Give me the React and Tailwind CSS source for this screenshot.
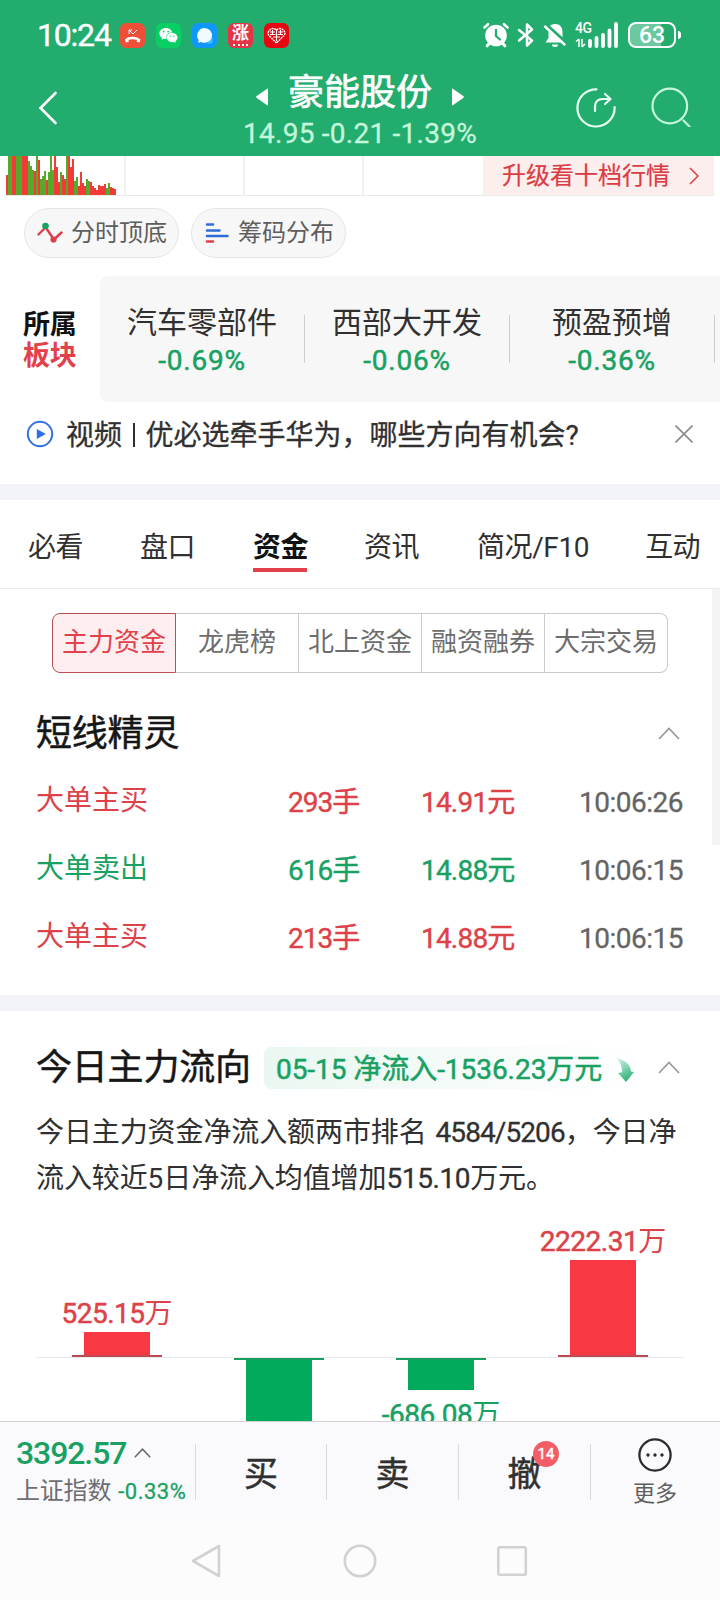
import { FaWeixin } from "react-icons/fa";

const volume = [
  ["r", 20], ["g", 39], ["g", 39], ["r", 39], ["r", 39], ["g", 39], ["g", 39], ["g", 39],
  ["r", 39], ["r", 39], ["r", 39], ["g", 34], ["g", 29], ["g", 25], ["r", 24], ["g", 39],
  ["r", 35], ["g", 16], ["g", 19], ["g", 24], ["r", 15], ["g", 23], ["g", 39], ["g", 25],
  ["r", 39], ["r", 28], ["r", 13], ["g", 23], ["r", 20], ["r", 16], ["g", 39], ["r", 39],
  ["r", 28], ["r", 36], ["g", 14], ["g", 18], ["r", 9], ["r", 23], ["r", 12], ["r", 9],
  ["g", 16], ["g", 14], ["r", 13], ["r", 9], ["r", 7], ["r", 5], ["r", 10], ["r", 9],
  ["r", 9], ["r", 11], ["g", 7], ["g", 12], ["r", 8], ["r", 7], ["r", 6],
];

const sectors = [
  { name: "汽车零部件", change: "-0.69%" },
  { name: "西部大开发", change: "-0.06%" },
  { name: "预盈预增", change: "-0.36%" },
];

const segments = ["龙虎榜", "北上资金", "融资融券", "大宗交易"];

const orders = [
  { type: "大单主买", count: "293", price: "14.91", time: "10:06:26", up: true },
  { type: "大单卖出", count: "616", price: "14.88", time: "10:06:15", up: false },
  { type: "大单主买", count: "213", price: "14.88", time: "10:06:15", up: true },
];

const flows = [
  { label: "525.15", up: true, height: 23 },
  { label: "", up: false, height: 110 },
  { label: "-686.08", up: false, height: 30 },
  { label: "2222.31", up: true, height: 95 },
];

function StatusBar() {
  return (
    <div className="flex h-[70px] items-center pl-[37px] pr-[39px]">
      <span className="w-[83px] text-[32px] leading-none tracking-[-1.2px] [-webkit-text-stroke:0.4px]">10:24</span>
      <div className="flex flex-1 gap-[11px]">
        <span className="flex size-[25px] items-center justify-center rounded-md bg-[#ee4f38]">
          <svg viewBox="0 0 25 25" className="size-[25px]" fill="none" stroke="white">
            <path d="M9 7v4M9 7h3M9 7l4 4 4-4" strokeWidth="1" />
            <path d="M6 17.5c2-3.4 11-3.4 13.500 0" strokeWidth="2.400" />
            <path d="M5.500 18l3-.8M20 18l-3-.8" strokeWidth="3" />
          </svg>
        </span>
        <span className="flex size-[25px] items-center justify-center rounded-md bg-[#07cf63]">
          <FaWeixin className="size-[19px]" />
        </span>
        <span className="flex size-[25px] items-center justify-center rounded-md bg-[#0f97fb]">
          <svg viewBox="0 0 25 25" className="size-[25px]">
            <path d="M14 17.500c3 0 5-2 6-4 1 3 .5 5-.2 7h-4z" fill="#35c8ff" />
            <path d="M12.500 5a7.600 7.400 0 1 1-3.500 14l-3 .7.7-2.700A7.500 7.500 0 0 1 12.500 5z" fill="#f0faff" />
          </svg>
        </span>
        <span className="flex size-[25px] flex-col items-center rounded-md bg-[#e33546]">
          <span className="text-[17px] font-bold leading-[20px]">涨</span>
          <span className="mt-px h-[2px] w-[15px] border-t-2 border-dotted border-white" />
        </span>
        <span className="flex size-[25px] items-center justify-center rounded-md bg-[#e60510]">
          <svg viewBox="0 0 25 25" className="size-[25px]" fill="none" stroke="white">
            <path d="M12.500 20l-8-8c-2-4 4-9 8-5 4-4 10 1 8 5z" strokeWidth="1.500" strokeDasharray="2 .7" />
            <path d="M6 9h5M14 9h5M6 11.500h5.500M13.500 11.500H19M9 14h7M12.500 7v11M8.500 7v5M16.500 7v5" strokeWidth="1.100" />
          </svg>
        </span>
      </div>
      <div className="flex items-center">
        <svg viewBox="0 0 26 26" className="h-[26px] w-[26px]" fill="none" stroke="white" strokeLinecap="round">
          <circle cx="13" cy="13.500" r="10.800" fill="white" stroke="none" />
          <path d="M1.500 5.500L5 2.200M24.500 5.500L21 2.200" strokeWidth="2.600" />
          <path d="M4 24l3-3.500M22 24l-3-3.500" strokeWidth="2.800" />
          <path d="M13 8v6l4 3.500" stroke="#22ac6e" strokeWidth="2.300" />
        </svg>
        <svg viewBox="0 0 18 26" className="ml-2 h-[26px] w-[18px]" fill="none" stroke="white" strokeWidth="2.500" strokeLinecap="round" strokeLinejoin="round">
          <path d="M2 8l13 10.500L10 23.500v-21l5 5L2 18.500" />
        </svg>
        <svg viewBox="0 0 24 26" className="ml-2 h-[26px] w-[24px]">
          <path d="M12 2c5 0 7.500 3.500 7.500 8v6l3 4.500h-20l3-4.500v-6C5.500 5.500 7 2 12 2z" fill="white" />
          <path d="M9 22.500h6a3 2.500 0 0 1-6 0z" fill="white" />
          <path d="M3 2.500l21 19" stroke="#22ac6e" strokeWidth="3.500" />
          <path d="M2 4.500l19.500 18" stroke="white" strokeWidth="2.400" strokeLinecap="round" />
        </svg>
        <div className="relative ml-2 h-[26px] w-11">
          <span className="absolute left-0 top-0 text-[14px] font-medium leading-[13px] tracking-[-0.5px]">4G</span>
          <svg viewBox="0 0 44 26" className="h-[26px] w-11" stroke="white">
            <path d="M4 17v8M1 19.500L4 17M7 17v8M7 25l3-3" strokeWidth="1.500" fill="none" />
            <path d="M15 19v5M21.500 16v8M28 13v11M34.500 8.500V24M41 2v22" strokeWidth="3.800" strokeLinecap="round" />
          </svg>
        </div>
        <div className="ml-[9px] flex h-[26px] w-[48px] items-center justify-center rounded-lg border-2 border-white bg-linear-to-r from-[#6bc89f] from-70% to-transparent to-70% text-[23px] font-medium leading-none">
          63
        </div>
        <span className="ml-[2px] h-2 w-[3px] rounded-r bg-white" />
      </div>
    </div>
  );
}

function Header() {
  return (
    <header className="h-[156px] shrink-0 bg-[#22ac6e] text-white">
      <StatusBar />
      <div className="flex h-[86px] items-start px-[38px]">
        <svg viewBox="0 0 20 34" className="mt-[21px] h-[34px] w-5 shrink-0" fill="none" stroke="white" strokeWidth="2.600" strokeLinecap="round">
          <path d="M17.500 2L2.500 17l15 15" />
        </svg>
        <div className="ml-[128px] flex w-[344px] shrink-0 flex-col items-center">
          <div className="mt-px flex items-center pl-1 text-[36px] leading-[44px] [-webkit-text-stroke:0.7px]">
            <svg viewBox="0 0 12 18" className="mt-2 h-[18px] w-3" fill="white">
              <path d="M12 1.500v15Q12 18 10.800 17L.7 10Q-.3 9 .7 8L10.800 1Q12 0 12 1.500z" />
            </svg>
            <span className="mx-[20px]">豪能股份</span>
            <svg viewBox="0 0 12 18" className="mt-2 h-[18px] w-3" fill="white">
              <path d="M0 1.500v15Q0 18 1.200 17l10.100-7q1-1 0-2L1.200 1Q0 0 0 1.500z" />
            </svg>
          </div>
          <p className="mt-[3px] pl-1 text-[28px] leading-[32px] tracking-[0.25px] text-[#c5f7dd] [-webkit-text-stroke:0.3px]">
            14.95 -0.21 -1.39%
          </p>
        </div>
        <svg viewBox="0 0 40 40" className="ml-[46px] mt-[18px] size-10 shrink-0" fill="none" stroke="#e9fff4" strokeWidth="2.200" strokeLinecap="round">
          <path d="M20.500 1.300A18.600 18.600 0 1 0 38.600 19" />
          <path d="M19 23v-4c0-5 3-8 8-8h7M29 6l5.500 5-5.500 5" strokeLinejoin="round" />
        </svg>
        <svg viewBox="0 0 40 40" className="ml-[35px] mt-[17px] size-10 shrink-0" fill="none" stroke="#c5f7dd" strokeWidth="2.200" strokeLinecap="round">
          <circle cx="18.800" cy="19" r="17.300" />
          <path d="M32.500 33.500l6 6" />
        </svg>
      </div>
    </header>
  );
}

function VolumeStrip() {
  return (
    <div className="mx-1.5 flex h-10 shrink-0 border-b border-[#ebebeb]">
      <svg viewBox="0 0 110 39" className="h-[39px] w-[110px]" shapeRendering="crispEdges">
        {volume.map(([side, h], i) => (
          <rect key={i} x={i * 2} y={39 - h} width="2" height={h} fill={side === "r" ? "#f23b36" : "#55aa2c"} />
        ))}
      </svg>
      <div className="ml-2 w-[119px] border-l-2 border-[#f0f0f0]" />
      <div className="w-[119px] border-l-2 border-[#f0f0f0]" />
      <div className="w-[121px] border-l-2 border-[#f0f0f0]" />
      <div className="flex flex-1 items-center bg-[#fdeeee] pl-[19px] text-[24px] leading-[38px] text-[#dc3c43] [-webkit-text-stroke:0.2px]">
        升级看十档行情
        <svg viewBox="0 0 10 18" className="ml-[19px] h-[18px] w-2.5" fill="none" stroke="#dc3c43" strokeWidth="1.500">
          <path d="M1 1l8 8-8 8" />
        </svg>
      </div>
    </div>
  );
}

function Tools() {
  return (
    <div className="mt-3 flex h-[50px] shrink-0 gap-3 pl-6 text-[24px] text-[#5e5e5e]">
      <div className="flex w-[155px] items-center rounded-full border border-[#e4e4e4] bg-[#f7f7f7] pl-3">
        <svg viewBox="0 0 26 22" className="mr-2 h-[22px] w-[26px]" fill="none">
          <path d="M1.500 12.500L7 7M9.500 6.500L16.500 17M17 17.500L24.500 10.500" stroke="#dc3f4b" strokeWidth="2.400" strokeLinecap="round" />
          <circle cx="8.500" cy="4" r="3.300" fill="#18a163" />
          <circle cx="16.500" cy="17.500" r="3.100" fill="#dc3f4b" />
        </svg>
        <span className="leading-[44px]">分时顶底</span>
      </div>
      <div className="flex w-[155px] items-center rounded-full border border-[#e4e4e4] bg-[#f7f7f7] pl-[13px]">
        <svg viewBox="0 0 24 22" className="mr-[9px] h-[22px] w-6" strokeWidth="2.500" strokeLinecap="round">
          <path d="M2 2.500h6M2 8.500h12.500M2 14h20.500" stroke="#2e6cd8" />
          <path d="M2 19.500h6" stroke="#dc3f4b" />
        </svg>
        <span className="leading-[44px]">筹码分布</span>
      </div>
    </div>
  );
}

function Sectors() {
  return (
    <div className="mt-[18px] flex h-[126px] shrink-0">
      <div className="w-[100px] pl-[23px] pt-[34px] text-[27px] font-bold leading-[31px] tracking-[-0.2px] text-[#111]">
        <p>所属</p>
        <p className="text-[#e2404a]">板块</p>
      </div>
      <div className="flex flex-1 overflow-hidden rounded-l-lg bg-[#f7f7f7]">
        {sectors.map((s) => (
          <div key={s.name} className="flex w-[205px] shrink-0 items-center">
            <div className="flex-1 pt-1.5 text-center">
              <p className="text-[30px] leading-[38px] text-[#303030]">{s.name}</p>
              <p className="text-[28px] leading-[38px] tracking-[0.8px] text-[#18a163] [-webkit-text-stroke:0.5px]">{s.change}</p>
            </div>
            <span className="h-12 w-px bg-[#cfcfcf]" />
          </div>
        ))}
      </div>
    </div>
  );
}

function VideoRow() {
  return (
    <div className="flex h-[82px] shrink-0 items-start pl-[26px] pr-[27px] pt-4">
      <svg viewBox="0 0 28 28" className="mt-0.5 size-7" fill="none">
        <circle cx="14" cy="14" r="12.200" stroke="#3572dd" strokeWidth="2" />
        <path d="M10.800 9v10l9-5z" fill="#2f6fe6" />
      </svg>
      <p className="ml-[12px] flex-1 whitespace-nowrap text-[28px] leading-9 text-[#303030] [-webkit-text-stroke:0.3px]">
        视频
        <span className="mx-[10.5px] inline-block h-6 w-[2.5px] align-[-2px] bg-[#303030]" />
        优必选牵手华为，哪些方向有机会?
      </p>
      <svg viewBox="0 0 18 18" className="mt-[7px] size-[18px]" stroke="#8a8a8a" strokeWidth="1.600">
        <path d="M.5.5l17 17M17.500.5l-17 17" />
      </svg>
    </div>
  );
}

function Tabs() {
  return (
    <nav className="flex h-[89px] shrink-0 items-start border-b border-[#ececec] pl-7 pr-5 pt-[26px] text-[28px] leading-[44px] tracking-[-0.6px] text-[#303030]">
      <span className="w-[112px]">必看</span>
      <span className="w-[113px]">盘口</span>
      <span className="w-[111px]">
        <span className="inline-block h-[46px] w-[54px] whitespace-nowrap border-b-4 border-[#e2404a] font-bold leading-[44px] text-[#111]">
          资金
        </span>
      </span>
      <span className="w-[113px]">资讯</span>
      <span className="flex-1 tracking-[-0.4px]">简况/F10</span>
      <span>互动</span>
    </nav>
  );
}

function Caret({ className }) {
  return (
    <svg viewBox="0 0 22 13" className={className} fill="none" strokeWidth="1.700">
      <path d="M1 12L11 1.500 21 12" stroke="currentColor" />
    </svg>
  );
}

function Orders() {
  return (
    <div className="flex h-[406px] shrink-0">
      <section className="flex-1">
        <div className="ml-[52px] mt-6 flex h-[60px] w-[616px] text-center text-[26px] leading-[56px] text-[#6d6d6d]">
          <span className="w-[124px] rounded-l-lg border border-[#b95055] bg-[#feeeef] text-[#e2404a]">主力资金</span>
          {segments.map((s) => (
            <span key={s} className="w-[123px] border border-l-0 border-[#cbcbcb] last:rounded-r-lg">
              {s}
            </span>
          ))}
        </div>
        <div className="mt-[35px] flex items-center justify-between pl-9 pr-8">
          <h2 className="pt-[3px] text-[36px] leading-[47px] tracking-[-0.2px] text-[#161616] [-webkit-text-stroke:0.5px]">短线精灵</h2>
          <Caret className="h-[13px] w-[22px] text-[#999]" />
        </div>
        <div className="mt-[10px]">
          {orders.map((o, i) => (
            <div
              key={i}
              className={`flex h-[68px] items-center pl-9 pr-[29px] pt-[2px] text-[28px] leading-9 ${o.up ? "text-[#dc4248]" : "text-[#18a163]"}`}
            >
              <span className="mb-[5px] w-[252px]">{o.type}</span>
              <span className="w-[133px] [-webkit-text-stroke:0.4px]">
                <span className="tracking-[-1px]">{o.count}</span>手
              </span>
              <span className="flex-1 [-webkit-text-stroke:0.4px]">
                <span className="tracking-[-0.8px]">{o.price}</span>元
              </span>
              <span className="tracking-[-0.5px] text-[#646464] [-webkit-text-stroke:0.3px]">{o.time}</span>
            </div>
          ))}
        </div>
      </section>
      <div className="h-64 w-2 bg-[#f4f4f4]" />
    </div>
  );
}

function FlowBar({ flow }) {
  const label = (
    <p className={`whitespace-nowrap text-[28px] leading-9 ${flow.up ? "text-[#dc4248]" : "text-[#18a163]"}`}>
      <span className="tracking-[-0.5px] [-webkit-text-stroke:0.5px]">{flow.label}</span>万
    </p>
  );

  if (flow.up) {
    return (
      <div className="flex h-[131px] w-[162px] flex-col items-center justify-end">
        {label}
        <span className="w-[66px] shrink-0 bg-[#f83842]" style={{ height: flow.height }} />
        <span className="h-[2px] w-[90px] shrink-0 bg-[#bd4a51]" />
      </div>
    );
  }

  return (
    <div className="mt-[132px] flex w-[162px] flex-col items-center">
      <span className="h-[2px] w-[90px] shrink-0 bg-[#189c60]" />
      <span className="w-[66px] shrink-0 bg-[#02aa5c]" style={{ height: flow.height }} />
      {flow.label && <div className="mt-[7px]">{label}</div>}
    </div>
  );
}

function FundFlow() {
  return (
    <section className="min-h-0 flex-1 overflow-hidden">
      <div className="mt-[31px] flex h-[50px] items-center pl-9">
        <h2 className="w-[228px] pt-[3px] text-[36px] leading-[47px] tracking-[-0.2px] text-[#161616] [-webkit-text-stroke:0.5px]">
          今日主力流向
        </h2>
        <div className="mt-0.5 flex h-[42px] w-[380px] items-center rounded-lg bg-linear-to-r from-[#eaf7f1] to-white pl-3 text-[28px] tracking-[-0.05px] text-[#18a163] [-webkit-text-stroke:0.5px]">
          <span className="whitespace-nowrap pt-1">05-15 净流入-1536.23万元</span>
          <svg viewBox="0 0 18 24" className="ml-auto mr-[10px] mt-[3px] h-6 w-[18px] shrink-0">
            <defs>
              <linearGradient id="fall" x1="0" y1="0" x2=".4" y2="1">
                <stop offset="0" stopColor="#d9f3e7" />
                <stop offset="1" stopColor="#35b57d" />
              </linearGradient>
            </defs>
            <path d="M0 0c8 1.500 14.500 6 15 13.500l3 .5-8 10L2 15l4-.8C6 8 4 3.500 0 0z" fill="url(#fall)" />
          </svg>
        </div>
        <Caret className="ml-[14px] h-[13px] w-[22px] text-[#999]" />
      </div>
      <p className="mt-[18px] whitespace-nowrap pl-9 text-[28px] leading-[46px] tracking-[-0.1px] text-[#303030]">
        今日主力资金净流入额两市排名 <span className="ml-0.5 tracking-[-0.9px] [-webkit-text-stroke:0.3px]">4584/5206</span>，今日净
        <br />
        流入较近5日净流入均值增加<span className="tracking-[-0.4px] [-webkit-text-stroke:0.3px]">515.10</span>万元。
      </p>
      {/* zero line sits 131px below the top of the plot */}
      <div className="mx-9 mt-6 flex h-72 items-start bg-[linear-gradient(#ebebeb,#ebebeb)] bg-[length:100%_1px] bg-[position:0_131px] bg-no-repeat">
        {flows.map((f, i) => (
          <FlowBar key={i} flow={f} />
        ))}
      </div>
    </section>
  );
}

function BottomBar() {
  return (
    <footer className="flex h-[100px] shrink-0 items-start border-t border-[#d2d2d4] bg-[#fafafd] text-[#303030]">
      <div className="w-[195px] whitespace-nowrap pl-4 pt-3">
        <div className="flex items-center">
          <span className="text-[32px] font-medium leading-[38px] tracking-[-1.1px] text-[#18a163]">3392.57</span>
          <Caret className="ml-2 h-2.5 w-[17px] stroke-2 text-[#6a6a6a]" />
        </div>
        <div className="pt-px leading-9">
          <span className="text-[24px] tracking-[-0.2px] text-[#6d6d72]">上证指数</span>
          <span className="ml-[7px] text-[22px] tracking-[0.5px] text-[#18a163] [-webkit-text-stroke:0.3px]">-0.33%</span>
        </div>
      </div>
      <div className="mt-[22px] flex h-14 flex-1 items-center text-[34px] [-webkit-text-stroke:0.5px]">
        <span className="flex h-full w-[131px] items-center justify-center border-l border-[#dadadc] pt-1">买</span>
        <span className="flex h-full w-[132px] items-center justify-center border-l border-[#dadadc] pt-1">卖</span>
        <span className="relative flex h-full w-[132px] items-center justify-center border-l border-[#dadadc] pt-1">
          撤
          <span className="absolute -top-[3px] left-[74px] flex size-[26px] items-center justify-center rounded-full bg-[#f35d66] text-[15px] text-white">
            14
          </span>
        </span>
        <span className="flex h-full flex-1 flex-col items-center border-l border-[#dadadc] pr-px">
          <svg viewBox="0 0 34 34" className="-mt-1.5 size-[34px] shrink-0" fill="none">
            <circle cx="17" cy="17" r="15.600" stroke="#2b2b2b" strokeWidth="2.300" />
            <path d="M10 17h.01M17 17h.01M24 17h.01" stroke="#2b2b2b" strokeWidth="3.400" strokeLinecap="round" />
          </svg>
          <span className="mt-1.5 text-[22px] leading-8 text-[#5e5e5e] [-webkit-text-stroke:0]">更多</span>
        </span>
      </div>
    </footer>
  );
}

function SystemNav() {
  return (
    <div className="flex h-[79px] shrink-0 items-center justify-center gap-[119px] bg-[#fcfcfc]">
      <svg viewBox="0 0 34 34" className="h-[34px] w-[34px]" fill="none" stroke="#d2d2d2" strokeWidth="2.600" strokeLinejoin="round">
        <path d="M29 2v30L3 17z" />
      </svg>
      <svg viewBox="0 0 34 34" className="h-[34px] w-[34px]" fill="none" stroke="#d2d2d2" strokeWidth="2.600">
        <circle cx="17" cy="17" r="15.200" />
      </svg>
      <svg viewBox="0 0 34 34" className="h-[34px] w-[34px]" fill="none" stroke="#d2d2d2" strokeWidth="2.600">
        <rect x="2.300" y="3.300" width="27.500" height="27.500" rx="1.500" />
      </svg>
    </div>
  );
}

export default function App() {
  return (
    <div
      lang="zh-CN"
      className="flex h-[1600px] w-[720px] flex-col overflow-hidden bg-white font-['Roboto','Noto_Sans_CJK_SC',sans-serif]"
    >
      <Header />
      <VolumeStrip />
      <Tools />
      <Sectors />
      <VideoRow />
      <div className="h-4 shrink-0 bg-[#f3f4f9]" />
      <Tabs />
      <Orders />
      <div className="h-4 shrink-0 bg-[#f3f4f9]" />
      <FundFlow />
      <BottomBar />
      <SystemNav />
    </div>
  );
}
